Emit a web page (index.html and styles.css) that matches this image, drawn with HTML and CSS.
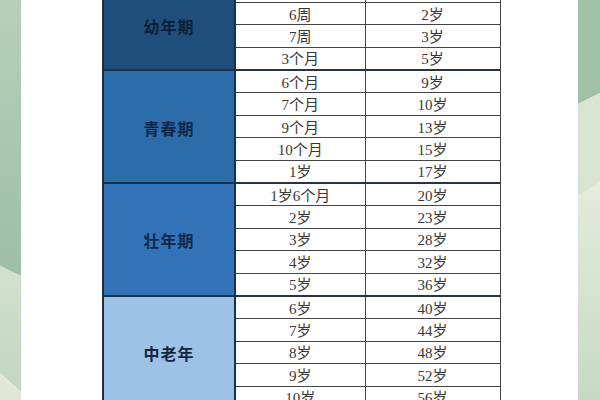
FILE: index.html
```html
<!DOCTYPE html>
<html lang="zh-CN">
<head>
<meta charset="utf-8">
<title>猫咪年龄对照表</title>
<link rel="stylesheet" href="styles.css">
</head>
<body>
<div class="page">
  <div class="strip strip-left">
    <svg width="21" height="400" viewBox="0 0 21 400" preserveAspectRatio="none">
      <defs>
        <linearGradient id="lt" x1="0" y1="0" x2="0" y2="1">
          <stop offset="0" stop-color="#b8cfb9"/>
          <stop offset="1" stop-color="#9dbea7"/>
        </linearGradient>
        <linearGradient id="lm" x1="0" y1="0" x2="0" y2="1">
          <stop offset="0" stop-color="#d3e2cc"/>
          <stop offset="1" stop-color="#c2d6c0"/>
        </linearGradient>
      </defs>
      <polygon points="0,0 21,0 21,276 0,266" fill="url(#lt)"/>
      <polygon points="0,266 21,276 21,392 0,373" fill="url(#lm)"/>
      <polygon points="0,373 21,392 21,400 0,400" fill="#e0e9d7"/>
    </svg>
  </div>
  <div class="panel">
    <table class="age-table">
      <colgroup>
        <col class="c1"><col class="c2"><col class="c3">
      </colgroup>
      <tbody>
        <tr><td class="grp g1" rowspan="4">幼年期</td><td></td><td></td></tr>
        <tr><td>6周</td><td>2岁</td></tr>
        <tr><td>7周</td><td>3岁</td></tr>
        <tr class="last"><td>3个月</td><td>5岁</td></tr>
        <tr><td class="grp g2" rowspan="5">青春期</td><td>6个月</td><td>9岁</td></tr>
        <tr><td>7个月</td><td>10岁</td></tr>
        <tr><td>9个月</td><td>13岁</td></tr>
        <tr><td>10个月</td><td>15岁</td></tr>
        <tr class="last"><td>1岁</td><td>17岁</td></tr>
        <tr><td class="grp g3" rowspan="5">壮年期</td><td>1岁6个月</td><td>20岁</td></tr>
        <tr><td>2岁</td><td>23岁</td></tr>
        <tr><td>3岁</td><td>28岁</td></tr>
        <tr><td>4岁</td><td>32岁</td></tr>
        <tr class="last"><td>5岁</td><td>36岁</td></tr>
        <tr><td class="grp g4" rowspan="5">中老年</td><td>6岁</td><td>40岁</td></tr>
        <tr><td>7岁</td><td>44岁</td></tr>
        <tr><td>8岁</td><td>48岁</td></tr>
        <tr><td>9岁</td><td>52岁</td></tr>
        <tr class="last"><td>10岁</td><td>56岁</td></tr>
      </tbody>
    </table>
  </div>
  <div class="strip strip-right">
    <svg width="22" height="400" viewBox="0 0 22 400" preserveAspectRatio="none">
      <defs>
        <linearGradient id="rb" x1="0" y1="0" x2="0" y2="1">
          <stop offset="0" stop-color="#e4ebdc"/>
          <stop offset="1" stop-color="#c6dac3"/>
        </linearGradient>
      </defs>
      <polygon points="0,0 22,0 22,93 0,104" fill="#9fc1a8"/>
      <polygon points="0,104 22,93 22,182 0,196" fill="#d9e5d1"/>
      <polygon points="0,196 22,182 22,400 0,400" fill="url(#rb)"/>
    </svg>
  </div>
</div>
</body>
</html>
```

FILE: styles.css
```css
html, body {
  margin: 0;
  padding: 0;
  width: 600px;
  height: 400px;
  overflow: hidden;
  background: #ffffff;
}

.page {
  display: flex;
  width: 600px;
  height: 400px;
}

.strip {
  flex: none;
  height: 400px;
}

.strip svg {
  display: block;
}

.strip-left {
  width: 21px;
}

.strip-right {
  width: 22px;
}

.panel {
  flex: 1;
  height: 400px;
  overflow: hidden;
  background: #ffffff;
  padding-left: 81px;
}

.age-table {
  border-collapse: collapse;
  table-layout: fixed;
  width: 397px;
  margin-top: -21px;
  font-family: "Liberation Serif", "Noto Sans CJK SC", serif;
  font-size: 15px;
  color: #383838;
}

.c1 { width: 132px; }
.c2 { width: 130px; }
.c3 { width: 135px; }

.age-table td {
  height: 19.4px;
  padding: 2px 0 0;
  border: 1px solid #444444;
  text-align: center;
  vertical-align: middle;
  line-height: 18px;
  white-space: nowrap;
}

.age-table tr.last td {
  border-bottom: 2px solid #2a3440;
}

.age-table td.grp {
  padding: 2px 0 0;
  font-family: "Noto Sans CJK SC", sans-serif;
  font-weight: 700;
  font-size: 16px;
  letter-spacing: 1px;
  border: 2px solid #1c3048;
}

.g1 { background: #1f4e7b; color: #0e2038; }
.g2 { background: #2c6ca9; color: #10284a; }
.g3 { background: #3173b6; color: #12294a; }
.g4 { background: #9cc2e6; color: #17263e; }
```
